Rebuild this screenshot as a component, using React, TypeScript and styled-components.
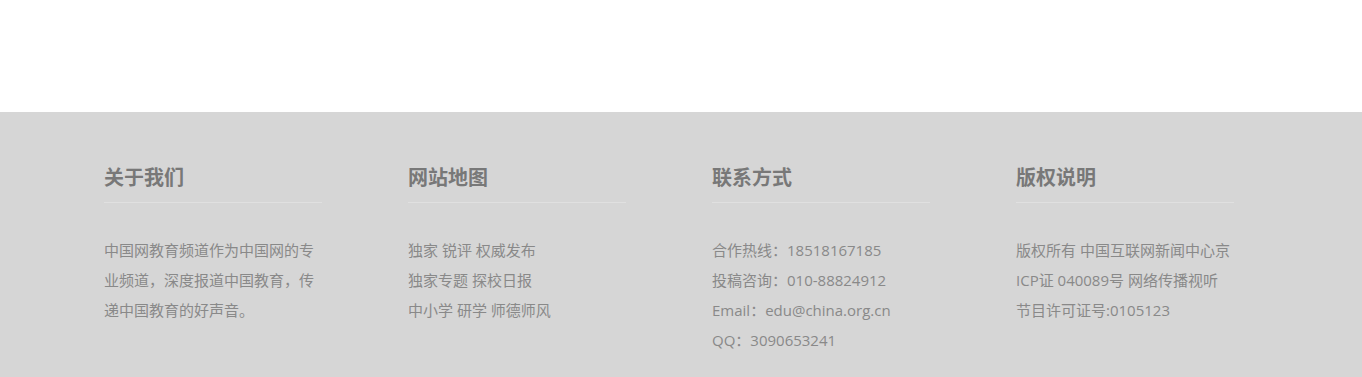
import styled, { createGlobalStyle } from 'styled-components';

const GlobalStyle = createGlobalStyle`
  html, body {
    margin: 0;
    padding: 0;
    background: #fff;
  }
  body {
    font-family: "Open Sans", "Noto Sans CJK SC", sans-serif;
  }
`;

const COLUMNS = [
  {
    title: '关于我们',
    lines: ['中国网教育频道作为中国网的专', '业频道，深度报道中国教育，传', '递中国教育的好声音。'],
  },
  {
    title: '网站地图',
    lines: ['独家 锐评 权威发布', '独家专题 探校日报', '中小学 研学 师德师风'],
  },
  {
    title: '联系方式',
    lines: ['合作热线：18518167185', '投稿咨询：010-88824912', 'Email：edu@china.org.cn', 'QQ：3090653241'],
  },
  {
    title: '版权说明',
    lines: ['版权所有 中国互联网新闻中心京', 'ICP证 040089号 网络传播视听', '节目许可证号:0105123'],
  },
];

const App = () => {
  return (
    <>
      <GlobalStyle />
      <Page>
        <TopArea />
        <Footer>
          <Columns>
            {COLUMNS.map((col) => (
              <Column key={col.title}>
                <Heading>{col.title}</Heading>
                <Body>
                  {col.lines.map((line) => (
                    <Line key={line}>{line}</Line>
                  ))}
                </Body>
              </Column>
            ))}
          </Columns>
        </Footer>
      </Page>
    </>
  );
};

export default App;

const Page = styled.div`
  display: flex;
  flex-direction: column;
  min-height: 100vh;
`;

const TopArea = styled.div`
  height: 112px;
  background: #fff;
`;

const Footer = styled.footer`
  flex: 1;
  background: #d6d6d6;
  padding: 50px 0 20px 104px;
`;

const Columns = styled.div`
  display: grid;
  grid-template-columns: repeat(4, 304px);
`;

const Column = styled.div`
  width: 218px;
`;

const Heading = styled.h3`
  margin: 0;
  font-family: "Noto Sans CJK SC", sans-serif;
  font-size: 20px;
  font-weight: bold;
  line-height: 30px;
  color: #787878;
  padding-bottom: 10px;
  border-bottom: 1px solid #e0e0e0;
`;

const Body = styled.div`
  margin-top: 32px;
  font-size: 15px;
  line-height: 30px;
  color: #898989;
`;

const Line = styled.div`
  white-space: nowrap;
`;
